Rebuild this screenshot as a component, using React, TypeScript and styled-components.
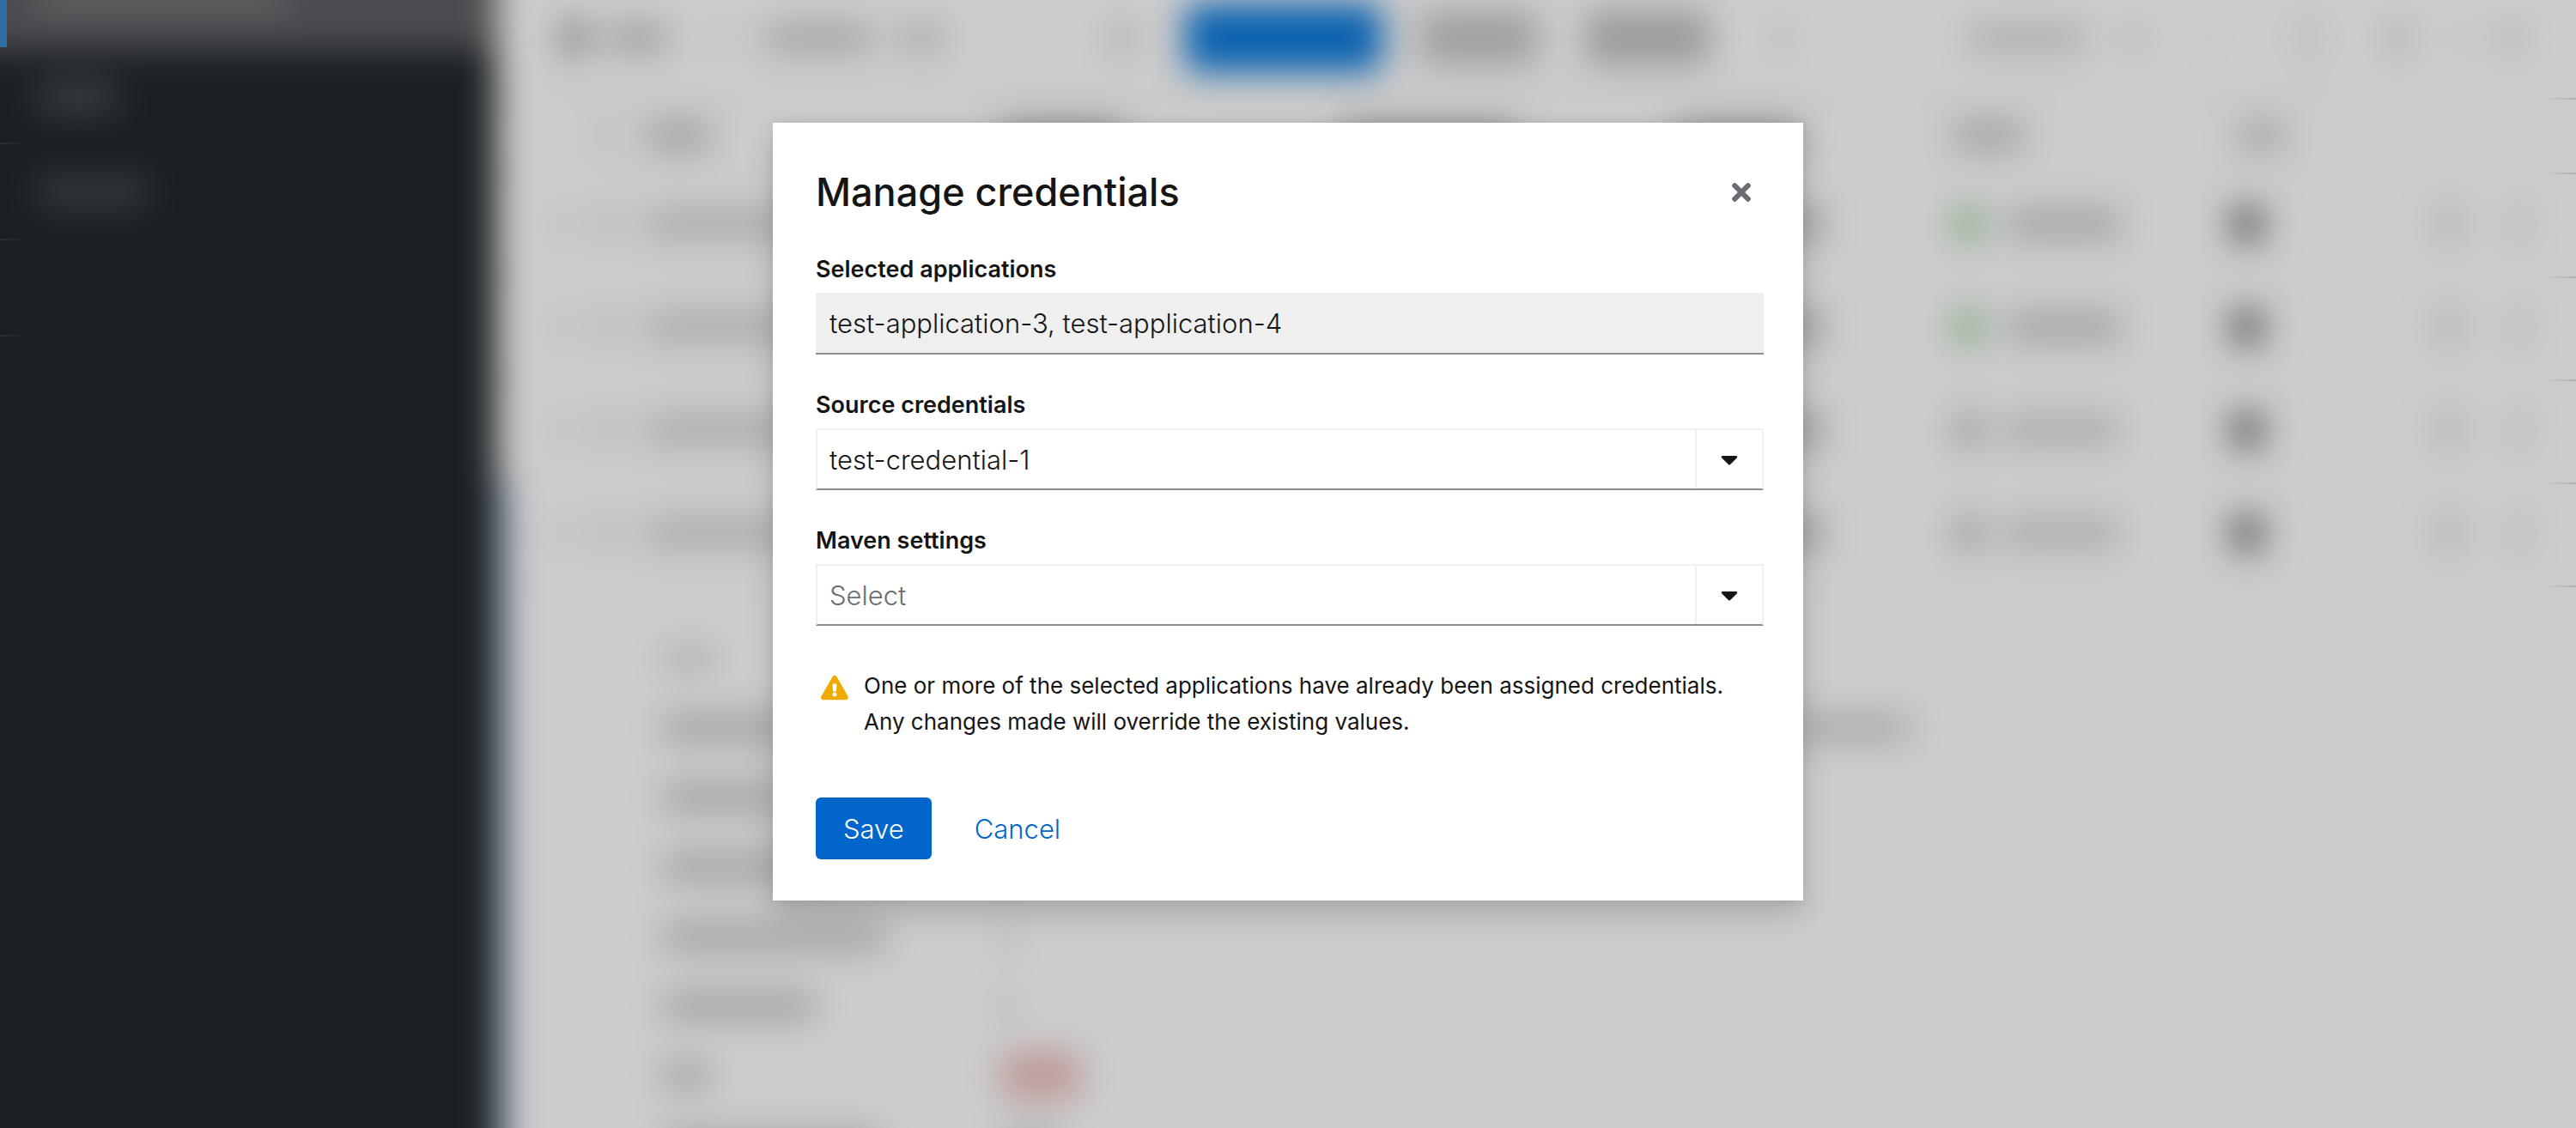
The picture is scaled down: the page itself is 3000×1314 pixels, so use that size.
import React, { useState } from 'react';
import styled, { createGlobalStyle } from 'styled-components';
import { FaCaretDown, FaExclamationTriangle, FaTimes } from 'react-icons/fa';

const GlobalStyle = createGlobalStyle`
  *, *::before, *::after { box-sizing: border-box; }
  body {
    margin: 0;
    background: #cccccc;
    color: #151515;
    font-family: Inter, "Liberation Sans", sans-serif;
    font-weight: 350;
  }
  button, input, select { font: inherit; color: inherit; }
`;

const Screen = styled.div`
  position: relative;
  min-height: 100vh;
  overflow: hidden;
`;

/* ---------- Blurred page behind the dialog ---------- */

/* Reaches past the window on every side so that the blur does not fade at its borders. */
const Scene = styled.div`
  position: absolute;
  inset: -60px;
  display: flex;
  background: #cccccc;
  filter: blur(20px);
`;

const Sidebar = styled.div`
  flex: 0 0 638px;
  padding: 0 0 0 60px;
  background: #1c2023;
`;

const NavItem = styled.div<{ $active?: boolean }>`
  display: flex;
  align-items: center;
  height: ${(p) => (p.$active ? 118 : 110)}px;
  margin-left: ${(p) => (p.$active ? -60 : 0)}px;
  padding: 0 0 0 ${(p) => (p.$active ? 100 : 44)}px;
  background: ${(p) => (p.$active ? '#4b4c4f' : 'transparent')};
`;

const Content = styled.div`
  flex: 1;
  min-width: 0;
  padding: 60px 60px 0 0;
`;

const Smudge = styled.span<{ $w: number; $h?: number; $tone?: string; $ml?: number }>`
  display: block;
  flex: none;
  width: ${(p) => p.$w}px;
  height: ${(p) => p.$h ?? 34}px;
  margin-left: ${(p) => p.$ml ?? 0}px;
  border-radius: 14px;
  background: ${(p) => p.$tone ?? '#aaaaaa'};
`;

const Toolbar = styled.div`
  display: flex;
  justify-content: space-between;
  height: 116px;
  padding: 0 60px 26px 76px;
  border-bottom: 2px solid #a8a8a8;
`;

const ToolGroup = styled.div`
  display: flex;
  align-items: center;
`;

const columns = '68px 104px 83fr 79fr 78fr 65fr 65fr 48fr 84px 80px';

const Row = styled.div<{ $head?: boolean }>`
  display: grid;
  grid-template-columns: ${columns};
  align-items: center;
  height: ${(p) => (p.$head ? 86 : 120)}px;
  border-bottom: 2px solid #b4b4b4;
`;

const Cell = styled.div`
  display: flex;
  align-items: center;
`;

const ExpandedGroup = styled.div`
  min-height: 900px;
  border-left: 14px solid #7187a8;
`;

const ExpandedRow = styled(Row)`
  margin-left: -14px;
`;

const Details = styled.div`
  display: grid;
  grid-template-columns: 395px 1fr;
  grid-auto-rows: 81px;
  align-items: center;
  padding: 44px 0 0 178px;
`;

const Edge = styled.div<{ $side: 'left' | 'right' }>`
  position: absolute;
  top: 0;
  ${(p) => p.$side}: 0;
  width: 34px;
  mask-image: linear-gradient(to ${(p) => p.$side}, transparent, #000 80%);
`;

const EdgeMark = styled.div<{ $h: number; $line: string; $fill?: string }>`
  height: ${(p) => p.$h}px;
  border-bottom: 2px solid ${(p) => p.$line};
  background: linear-gradient(90deg, ${(p) => p.$fill ?? 'transparent'} 8px, transparent 8px);
`;

const tableRows = [
  { ready: true },
  { ready: true },
  { ready: false },
  { ready: false },
];

const details: { label: number; value?: { w: number; h?: number; tone?: string } }[] = [
  { label: 66 },
  { label: 160, value: { w: 1062 } },
  { label: 150 },
  { label: 210 },
  { label: 264, value: { w: 16, tone: '#b0b0b0' } },
  { label: 182, value: { w: 16, tone: '#b4b4b4' } },
  { label: 58, value: { w: 94, h: 56, tone: '#bd9a98' } },
  { label: 256, value: { w: 70 } },
];

function RowCells({ ready }: { ready: boolean }) {
  return (
    <>
      <Cell><Smudge $w={16} $ml={70} $tone="#b6b6b6" /></Cell>
      <Cell><Smudge $w={28} $ml={50} $tone="#adb0b0" /></Cell>
      <Cell><Smudge $w={220} /></Cell>
      <Cell />
      <Cell><Smudge $w={160} /></Cell>
      <Cell><Smudge $w={178} $tone="#999999" /></Cell>
      <Cell>
        <Smudge $w={40} $h={42} $tone={ready ? '#8cae8c' : '#a0a5a5'} />
        <Smudge $w={ready ? 136 : 140} $ml={ready ? 24 : 18} $tone={ready ? '#a2a2a2' : '#a9abab'} />
      </Cell>
      <Cell><Smudge $w={42} $h={44} $tone="#686868" /></Cell>
      <Cell><Smudge $w={32} $tone="#a8aaaa" /></Cell>
      <Cell><Smudge $w={16} $h={38} $ml={6} $tone="#acacac" /></Cell>
    </>
  );
}

function Background() {
  return (
    <div aria-hidden="true">
      <Scene>
        <Sidebar>
          <NavItem $active><Smudge $w={296} $tone="#606264" /></NavItem>
          <NavItem><Smudge $w={94} $tone="#3f4144" /></NavItem>
          <NavItem><Smudge $w={128} $tone="#3a3c3f" /></NavItem>
        </Sidebar>
        <Content>
          <Toolbar>
            <ToolGroup>
              <Smudge $w={28} $h={46} $tone="#7c7c7c" />
              <Smudge $w={76} $ml={22} $tone="#a0a0a0" />
              <Smudge $w={18} $ml={50} $tone="#bababa" />
              <Smudge $w={130} $ml={40} $tone="#a4a4a4" />
              <Smudge $w={60} $ml={24} $tone="#acacac" />
              <Smudge $w={26} $ml={192} $tone="#a2a2a2" />
              <Smudge $w={230} $h={80} $ml={60} $tone="#0a62b0" />
              <Smudge $w={140} $h={64} $ml={42} $tone="#a0a0a0" />
              <Smudge $w={146} $h={64} $ml={54} $tone="#9b9b9b" />
              <Smudge $w={10} $h={38} $ml={76} $tone="#a9a9a9" />
            </ToolGroup>
            <ToolGroup>
              <Smudge $w={140} $tone="#afafaf" />
              <Smudge $w={24} $h={24} $ml={42} $tone="#ababab" />
              <Smudge $w={22} $h={20} $ml={64} $tone="#c0c0c0" />
              <Smudge $w={56} $h={62} $ml={78} $tone="#c5c5c5" />
              <Smudge $w={32} $ml={60} $tone="#adadad" />
              <Smudge $w={10} $ml={56} $tone="#b8b8b8" />
              <Smudge $w={30} $ml={36} $tone="#b2b2b2" />
            </ToolGroup>
          </Toolbar>
          <Row $head>
            <Cell />
            <Cell><Smudge $w={24} $ml={48} $tone="#b9baba" /></Cell>
            <Cell><Smudge $w={80} $tone="#a0a0a0" /></Cell>
            <Cell><Smudge $w={145} $tone="#909090" /></Cell>
            <Cell><Smudge $w={210} $tone="#949494" /></Cell>
            <Cell><Smudge $w={150} $tone="#949494" /></Cell>
            <Cell><Smudge $w={88} $tone="#a2a2a2" /></Cell>
            <Cell><Smudge $w={60} $ml={8} $tone="#a6a6a6" /></Cell>
          </Row>
          {tableRows.slice(0, 3).map((row, i) => (
            <Row key={i}><RowCells ready={row.ready} /></Row>
          ))}
          <ExpandedGroup>
            <ExpandedRow><RowCells ready={tableRows[3].ready} /></ExpandedRow>
            <Details>
              {details.map((d, i) => (
                <React.Fragment key={i}>
                  <Smudge $w={d.label} $tone={i === 0 ? '#b4b4b4' : '#a3a3a3'} />
                  {d.value ? (
                    <Smudge $w={d.value.w} $h={d.value.h} $tone={d.value.tone} />
                  ) : (
                    <span />
                  )}
                </React.Fragment>
              ))}
            </Details>
          </ExpandedGroup>
        </Content>
      </Scene>
      <Edge $side="left">
        <EdgeMark $h={55} $line="transparent" $fill="#2f6ea5" />
        {[113, 112, 112].map((h, i) => <EdgeMark key={i} $h={h} $line="#2c2d30" />)}
      </Edge>
      <Edge $side="right">
        {[116, 87, 121, 120, 120, 120].map((h, i) => <EdgeMark key={i} $h={h} $line="#b3b3b3" />)}
      </Edge>
    </div>
  );
}

/* ---------- Dialog ---------- */

const Overlay = styled.div`
  position: relative;
  display: flex;
  justify-content: center;
  padding: 143px 32px 64px;
`;

const Dialog = styled.section`
  width: 100%;
  max-width: 1200px;
  padding: 50px 46px 48px 50px;
  background: #ffffff;
  box-shadow: 0 16px 32px rgba(3, 3, 3, 0.16), 0 0 12px rgba(3, 3, 3, 0.08);
`;

const DialogHeader = styled.header`
  display: flex;
  align-items: center;
  justify-content: space-between;
`;

const Title = styled.h1`
  margin: 0;
  font-size: 45px;
  line-height: 62px;
  font-weight: 500;
`;

const CloseButton = styled.button`
  display: flex;
  padding: 10px;
  border: 0;
  background: transparent;
  color: #6a6e73;
  cursor: pointer;
`;

const Form = styled.form`
  display: flex;
  flex-direction: column;
  gap: 38px;
  margin-top: 38px;
`;

const Field = styled.div`
  display: flex;
  flex-direction: column;
  gap: 6px;
`;

const Label = styled.label`
  font-size: 27px;
  line-height: 42px;
  font-weight: 600;
`;

const ReadOnlyInput = styled.input`
  width: 100%;
  height: 72px;
  padding: 0 16px;
  border: 0;
  border-bottom: 2px solid #8a8d90;
  border-radius: 0;
  outline: 0;
  background: #efefef;
  font-size: 31px;
`;

const SelectBox = styled.div`
  display: grid;
  grid-template-columns: 1fr 80px;
`;

const NativeSelect = styled.select<{ $placeholder: boolean }>`
  grid-area: 1 / 1 / 2 / 3;
  height: 72px;
  padding: 0 96px 0 14px;
  appearance: none;
  border: 2px solid #f0f0f0;
  border-bottom-color: #8a8d90;
  border-radius: 0;
  background: #ffffff;
  color: ${(p) => (p.$placeholder ? '#6a6e73' : '#151515')};
  font-size: 31px;
`;

const CaretCell = styled.span`
  grid-area: 1 / 2;
  display: flex;
  align-items: center;
  justify-content: center;
  margin: 2px 2px 2px 0;
  border-left: 2px solid #f0f0f0;
  pointer-events: none;
`;

const Notice = styled.div`
  display: flex;
  align-items: flex-start;
  gap: 18px;
  margin-top: 11px;
  padding-left: 6px;
  font-size: 26px;
  line-height: 42px;
  font-weight: 400;
`;

const NoticeIcon = styled.span`
  display: flex;
  padding-top: 7px;
  color: #f0ab00;
`;

const NoticeText = styled.p`
  margin: 0;
`;

const Actions = styled.footer`
  display: flex;
  gap: 18px;
  margin-top: 29px;
`;

const ActionButton = styled.button<{ $primary?: boolean }>`
  height: 72px;
  padding: 0 32px;
  border: 0;
  border-radius: 6px;
  background: ${(p) => (p.$primary ? '#0066cc' : 'transparent')};
  color: ${(p) => (p.$primary ? '#ffffff' : '#0066cc')};
  font-size: 31px;
  cursor: pointer;
`;

interface SelectFieldProps {
  id: string;
  label: string;
  initial: string;
  options: string[];
}

function SelectField({ id, label, initial, options }: SelectFieldProps) {
  const [value, setValue] = useState(initial);
  return (
    <Field>
      <Label htmlFor={id}>{label}</Label>
      <SelectBox>
        <NativeSelect
          id={id}
          value={value}
          $placeholder={value === ''}
          onChange={(e) => setValue(e.target.value)}
        >
          {options.map((o) => (
            <option key={o} value={o === 'Select' ? '' : o}>{o}</option>
          ))}
        </NativeSelect>
        <CaretCell><FaCaretDown size={32} /></CaretCell>
      </SelectBox>
    </Field>
  );
}

export default function App() {
  return (
    <Screen>
      <GlobalStyle />
      <Background />
      <Overlay>
        <Dialog role="dialog" aria-modal="true" aria-labelledby="dialog-title">
          <DialogHeader>
            <Title id="dialog-title">Manage credentials</Title>
            <CloseButton type="button" aria-label="Close">
              <FaTimes size={32} />
            </CloseButton>
          </DialogHeader>
          <Form onSubmit={(e) => e.preventDefault()}>
            <Field>
              <Label htmlFor="applications">Selected applications</Label>
              <ReadOnlyInput
                id="applications"
                type="text"
                readOnly
                value="test-application-3, test-application-4"
              />
            </Field>
            <SelectField
              id="source"
              label="Source credentials"
              initial="test-credential-1"
              options={['test-credential-1']}
            />
            <SelectField id="maven" label="Maven settings" initial="" options={['Select']} />
            <Notice>
              <NoticeIcon><FaExclamationTriangle size={32} /></NoticeIcon>
              <NoticeText>
                One or more of the selected applications have already been assigned credentials.
                <br />
                Any changes made will override the existing values.
              </NoticeText>
            </Notice>
            <Actions>
              <ActionButton type="submit" $primary>Save</ActionButton>
              <ActionButton type="button">Cancel</ActionButton>
            </Actions>
          </Form>
        </Dialog>
      </Overlay>
    </Screen>
  );
}
